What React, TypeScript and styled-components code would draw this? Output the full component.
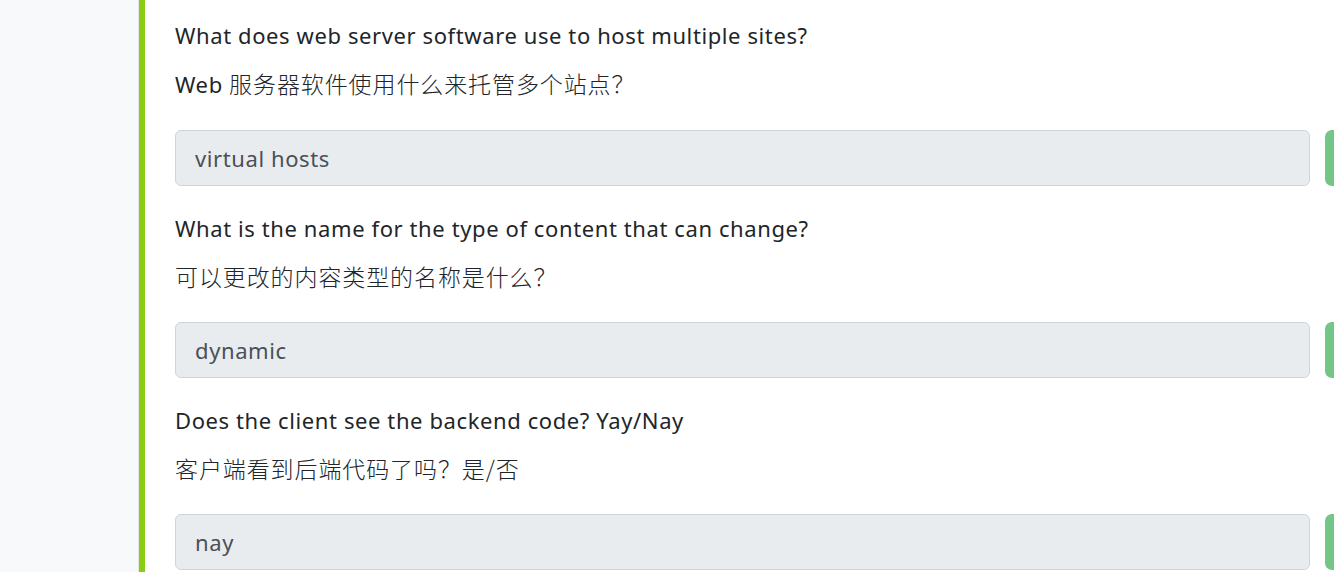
import styled, { createGlobalStyle } from 'styled-components';

const GlobalStyle = createGlobalStyle`
  html, body {
    margin: 0;
    padding: 0;
    background: #fff;
    overflow: hidden;
  }
  body {
    font-family: "Noto Sans", "Noto Sans CJK SC", sans-serif;
    color: #212529;
  }
`;

type Question = {
  en: string;
  zh: string;
  answer: string;
};

const questions: Question[] = [
  {
    en: 'What does web server software use to host multiple sites?',
    zh: 'Web 服务器软件使用什么来托管多个站点？',
    answer: 'virtual hosts',
  },
  {
    en: 'What is the name for the type of content that can change?',
    zh: '可以更改的内容类型的名称是什么？',
    answer: 'dynamic',
  },
  {
    en: 'Does the client see the backend code? Yay/Nay',
    zh: '客户端看到后端代码了吗？是/否',
    answer: 'nay',
  },
];

// Latin words at the start of a translation keep the question's font
const splitLatin = (text: string) => {
  const match = text.match(/^([A-Za-z]+ )(.*)$/);
  return match ? [match[1], match[2]] : ['', text];
};

export default function App() {
  return (
    <>
      <GlobalStyle />
      <Page>
        <Sidebar />
        <Main>
          {questions.map((q) => {
            const [latin, rest] = splitLatin(q.zh);
            return (
              <Block key={q.en}>
                <QuestionText>{q.en}</QuestionText>
                <Translation lang="zh-CN">
                  {latin && <Latin>{latin}</Latin>}
                  {rest}
                </Translation>
                <AnswerRow>
                  <AnswerInput readOnly value={q.answer} />
                  <SubmitButton disabled aria-label="Correct answer" />
                </AnswerRow>
              </Block>
            );
          })}
        </Main>
      </Page>
    </>
  );
}

const Page = styled.div`
  display: flex;
  width: 1334px;
  height: 572px;
  overflow: hidden;
`;

const Sidebar = styled.aside`
  flex: 0 0 138px;
  background: #f8f9fa;
  border-right: 1px solid #e3e4e6;
`;

const Main = styled.main`
  flex: 1;
  border-left: 6px solid #88cd14;
  padding: 19px 0 0 30px;
  overflow: hidden;
`;

const Block = styled.section`
  margin-bottom: 26px;
`;

const QuestionText = styled.p`
  margin: 0 0 15px;
  font-size: 22px;
  line-height: 33px;
  letter-spacing: 0.6px;
  color: #212529;
  white-space: nowrap;
`;

const Translation = styled(QuestionText)`
  margin-bottom: 29px;
  font-family: "Noto Sans CJK SC", sans-serif;
  font-size: 23px;
  font-weight: 300;
  letter-spacing: 0.9px;
  text-spacing-trim: space-all;
  color: #212529;
`;

const Latin = styled.span`
  font-family: "Noto Sans", sans-serif;
  font-size: 22px;
  font-weight: 400;
  letter-spacing: 0.6px;
`;

const AnswerRow = styled.div`
  display: grid;
  grid-template-columns: 1135px 120px;
  gap: 15px;
`;

const AnswerInput = styled.input`
  box-sizing: border-box;
  height: 56px;
  padding: 0 19px;
  font-family: "Noto Sans", sans-serif;
  font-size: 22px;
  letter-spacing: 0.6px;
  color: #495057;
  background: #e9ecef;
  border: 1px solid #ced4da;
  border-radius: 6px;
  outline: none;
`;

const SubmitButton = styled.button`
  height: 56px;
  border: none;
  border-radius: 7px;
  background: #73c686;
`;
